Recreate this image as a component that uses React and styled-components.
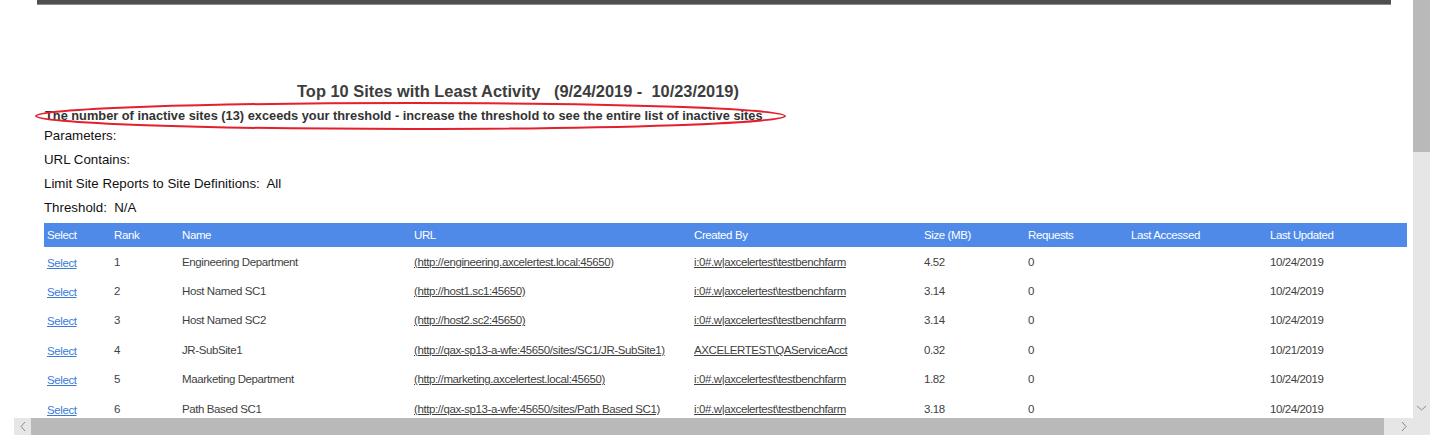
import React from "react";
import styled, { createGlobalStyle } from "styled-components";

const GlobalStyle = createGlobalStyle`
  html, body {
    margin: 0;
    padding: 0;
    background: #fff;
    font-family: "Liberation Sans", Arial, sans-serif;
  }
`;

const Window = styled.div`
  width: 1452px;
  height: 440px;
  display: grid;
  grid-template-columns: 1413px 17px 22px;
  grid-template-rows: 418px 17px 5px;
  overflow: hidden;
  background: #fff;
`;

const Viewport = styled.div`
  grid-column: 1;
  grid-row: 1;
  overflow: hidden;
  display: flex;
  flex-direction: column;
`;

const TopRule = styled.div`
  margin-left: 37px;
  width: 1354px;
  height: 4px;
  background: #4f4f4f;
  border-bottom: 1px solid #8c8c8c;
  flex-shrink: 0;
`;

const Title = styled.h1`
  margin: 77px 0 0 37px;
  width: 962px;
  text-align: center;
  font-size: 16.4px;
  line-height: 18px;
  font-weight: bold;
  color: #3d3d3d;
  white-space: pre;
`;

const WarningWrap = styled.div`
  position: relative;
  margin: 8px 0 0 45px;
  align-self: flex-start;
`;

const Warning = styled.div`
  font-size: 12.8px;
  line-height: 16px;
  font-weight: bold;
  color: #333;
`;

const Circle = styled.svg`
  position: absolute;
  left: -10px;
  top: -6px;
  pointer-events: none;
  overflow: visible;
`;

const Params = styled.div`
  margin: 0 0 0 44px;
  display: flex;
  flex-direction: column;
`;

const ParamLine = styled.div`
  font-size: 13.3px;
  line-height: 24px;
  color: #111;
  white-space: pre;
`;

const Table = styled.div`
  margin: 3px 0 0 44px;
  width: 1363px;
  flex-shrink: 0;
`;

const cols = "67px 68px 232px 280px 230px 104px 103px 139px 1fr";

const tableFont = `
  font-size: 11.5px;
  letter-spacing: -0.4px;
  white-space: nowrap;
`;

const HeadRow = styled.div`
  display: grid;
  grid-template-columns: ${cols};
  height: 24px;
  align-items: center;
  background: #4f8ae9;
`;

const HeadCell = styled.div`
  padding-left: 3px;
  color: #fff;
  ${tableFont}
`;

const Row = styled.div`
  display: grid;
  grid-template-columns: ${cols};
  height: 29.4px;
  align-items: center;
`;

const Cell = styled.div`
  padding-left: 3px;
  color: #3f3f3f;
  text-decoration: ${(p) => (p.$link ? "underline" : "none")};
  ${tableFont}
`;

const SelectLink = styled.a`
  padding-left: 3px;
  color: #3b7ad9;
  text-decoration: underline;
  cursor: pointer;
  ${tableFont}
`;

const VScroll = styled.div`
  grid-column: 2;
  grid-row: 1;
  display: flex;
  flex-direction: column;
  background: #e6e6e6;
`;

const VThumb = styled.div`
  height: 152px;
  background: #b9b9b9;
`;

const VTrack = styled.div`
  flex: 1;
  display: flex;
  align-items: flex-end;
  justify-content: center;
  padding-bottom: 6px;
`;

const HScroll = styled.div`
  grid-column: 1 / span 2;
  grid-row: 2;
  margin-left: 14px;
  display: flex;
  background: #e6e6e6;
`;

const HButton = styled.div`
  width: ${(p) => p.$w}px;
  display: flex;
  align-items: center;
  justify-content: ${(p) => p.$justify || "center"};
  padding-left: ${(p) => p.$pl || 0}px;
  box-sizing: border-box;
`;

const HThumb = styled.div`
  flex: 1;
  background: #b9b9b9;
`;

const Chevron = ({ dir }) => {
  const pts = {
    left: "6,1 2,5.5 6,10",
    right: "2,1 6,5.5 2,10",
    down: "1,2 5.5,6 10,2",
  }[dir];
  const vert = dir === "down";
  return (
    <svg width={vert ? 11 : 8} height={vert ? 8 : 11} viewBox={vert ? "0 0 11 8" : "0 0 8 11"}>
      <polyline points={pts} fill="none" stroke="#8a8a8a" strokeWidth="1" />
    </svg>
  );
};

const headers = ["Select", "Rank", "Name", "URL", "Created By", "Size (MB)", "Requests", "Last Accessed", "Last Updated"];

const rows = [
  ["1", "Engineering Department", "(http://engineering.axcelertest.local:45650)", "i:0#.w|axcelertest\\testbenchfarm", "4.52", "0", "", "10/24/2019"],
  ["2", "Host Named SC1", "(http://host1.sc1:45650)", "i:0#.w|axcelertest\\testbenchfarm", "3.14", "0", "", "10/24/2019"],
  ["3", "Host Named SC2", "(http://host2.sc2:45650)", "i:0#.w|axcelertest\\testbenchfarm", "3.14", "0", "", "10/24/2019"],
  ["4", "JR-SubSite1", "(http://qax-sp13-a-wfe:45650/sites/SC1/JR-SubSite1)", "AXCELERTEST\\QAServiceAcct", "0.32", "0", "", "10/21/2019"],
  ["5", "Maarketing Department", "(http://marketing.axcelertest.local:45650)", "i:0#.w|axcelertest\\testbenchfarm", "1.82", "0", "", "10/24/2019"],
  ["6", "Path Based SC1", "(http://qax-sp13-a-wfe:45650/sites/Path Based SC1)", "i:0#.w|axcelertest\\testbenchfarm", "3.18", "0", "", "10/24/2019"],
];

const App = () => {
  return (
    <>
      <GlobalStyle />
      <Window>
        <Viewport>
          <TopRule />
          <Title>{"Top 10 Sites with Least Activity   (9/24/2019 -  10/23/2019)"}</Title>
          <WarningWrap>
            <Warning>
              The number of inactive sites (13) exceeds your threshold - increase the threshold to see the entire list of inactive sites
            </Warning>
            <Circle width="751" height="28" viewBox="0 0 751 28">
              <ellipse cx="375.5" cy="14" rx="374.5" ry="13" fill="none" stroke="#e3202b" strokeWidth="2" />
            </Circle>
          </WarningWrap>
          <Params>
            <ParamLine>Parameters:</ParamLine>
            <ParamLine>URL Contains:</ParamLine>
            <ParamLine>{"Limit Site Reports to Site Definitions:  All"}</ParamLine>
            <ParamLine>{"Threshold:  N/A"}</ParamLine>
          </Params>
          <Table>
            <HeadRow>
              {headers.map((h) => (
                <HeadCell key={h}>{h}</HeadCell>
              ))}
            </HeadRow>
            {rows.map((r) => (
              <Row key={r[0]}>
                <div>
                  <SelectLink>Select</SelectLink>
                </div>
                <Cell>{r[0]}</Cell>
                <Cell>{r[1]}</Cell>
                <Cell $link>{r[2]}</Cell>
                <Cell $link>{r[3]}</Cell>
                <Cell>{r[4]}</Cell>
                <Cell>{r[5]}</Cell>
                <Cell>{r[6]}</Cell>
                <Cell>{r[7]}</Cell>
              </Row>
            ))}
          </Table>
        </Viewport>
        <VScroll>
          <VThumb />
          <VTrack>
            <Chevron dir="down" />
          </VTrack>
        </VScroll>
        <HScroll>
          <HButton $w={17}>
            <Chevron dir="left" />
          </HButton>
          <HThumb />
          <HButton $w={46} $justify="flex-start" $pl={16}>
            <Chevron dir="right" />
          </HButton>
        </HScroll>
      </Window>
    </>
  );
};

export default App;
